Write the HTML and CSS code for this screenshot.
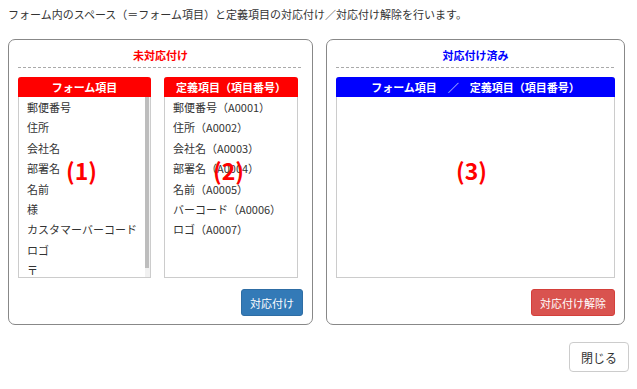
FILE: index.html
```html
<!doctype html>
<html lang="ja">

<head>
  <meta charset="utf-8">
  <title>対応付け</title>
  <link rel="stylesheet" href="styles.css">
</head>

<body>
  <p class="intro">フォーム内のスペース（＝フォーム項目）と定義項目の対応付け／対応付け解除を行います。</p>

  <div class="panels">

    <!-- unmatched -->
    <div class="panel panel-left">
      <div class="panel-title red">未対応付け</div>
      <div class="lists">
        <div class="list list-form">
          <div class="list-head red-bg">フォーム項目</div>
          <ul class="list-body">
            <li>郵便番号</li>
            <li>住所</li>
            <li>会社名</li>
            <li>部署名</li>
            <li>名前</li>
            <li>様</li>
            <li>カスタマーバーコード</li>
            <li>ロゴ</li>
            <li>〒</li>
          </ul>
          <span class="scrollbar"><span class="thumb"></span></span>
          <span class="mark mark-1">(1)</span>
        </div>
        <div class="list list-def">
          <div class="list-head red-bg">定義項目（項目番号）</div>
          <ul class="list-body">
            <li>郵便番号（A0001）</li>
            <li>住所（A0002）</li>
            <li>会社名（A0003）</li>
            <li>部署名（A0004）</li>
            <li>名前（A0005）</li>
            <li>バーコード（A0006）</li>
            <li>ロゴ（A0007）</li>
          </ul>
          <span class="mark mark-2">(2)</span>
        </div>
      </div>
      <div class="actions">
        <button type="button" class="btn btn-primary">対応付け</button>
      </div>
    </div>

    <!-- matched -->
    <div class="panel panel-right">
      <div class="panel-title blue">対応付け済み</div>
      <div class="list list-pairs">
        <div class="list-head blue-bg">フォーム項目　／　定義項目（項目番号）</div>
        <ul class="list-body"></ul>
        <span class="mark mark-3">(3)</span>
      </div>
      <div class="actions">
        <button type="button" class="btn btn-danger">対応付け解除</button>
      </div>
    </div>

  </div>

  <div class="footer">
    <button type="button" class="btn btn-default">閉じる</button>
  </div>
</body>

</html>
```

FILE: styles.css
```css
html,
body {
  margin: 0;
  padding: 0;
  background: #fff;
}

body {
  padding: 6px 8px 0;
  font-family: "Noto Sans CJK JP", "Noto Sans", sans-serif;
  font-size: 11px;
  color: #333;
}

.intro {
  margin: 0;
  line-height: 16px;
}

.panels {
  display: flex;
  gap: 13px;
  margin-top: 17px;
}

.panel {
  border: 1px solid #888;
  border-radius: 7px;
  padding: 0 9px 8px;
}

.panel-left {
  width: 285px;
}

.panel-right {
  width: 279px;
}

.panel-title {
  height: 28px;
  box-sizing: border-box;
  padding-top: 7px;
  margin-bottom: 9px;
  line-height: 16px;
  text-align: center;
  font-weight: bold;
  background: repeating-linear-gradient(to right, #aaa 0 3px, transparent 3px 5px) bottom / 100% 1px no-repeat;
}

.red {
  color: #f00;
}

.blue {
  color: #00f;
}

.lists {
  display: flex;
  gap: 13px;
}

.list {
  position: relative;
  display: flex;
  flex-direction: column;
  height: 201px;
  box-sizing: border-box;
  border: 1px solid #ccc;
  border-top: none;
  border-radius: 3px 3px 0 0;
}

.list-form {
  width: 133px;
}

.list-def {
  width: 134px;
}

.list-pairs {
  width: 279px;
}

.list-head {
  height: 20px;
  margin: 0 -1px;
  border-radius: 3px 3px 0 0;
  line-height: 20px;
  text-align: center;
  font-weight: bold;
  color: #fff;
}

.red-bg {
  background: #f00;
}

.blue-bg {
  background: #00f;
}

.list-body {
  flex: 1;
  min-height: 0;
  margin: 0;
  padding: 0 0 0 8px;
  list-style: none;
  overflow: hidden;
}

.list-body li {
  line-height: 20.4px;
  white-space: nowrap;
}

/* scrollbar of the form item list */
.scrollbar {
  position: absolute;
  top: 20px;
  right: 0;
  bottom: 0;
  width: 5px;
  background: #f1f1f1;
}

.thumb {
  display: block;
  width: 4px;
  height: 171px;
  background: #bdbdbd;
}

/* annotation markers drawn over the lists */
.mark {
  position: absolute;
  top: 78px;
  font-size: 23px;
  font-weight: bold;
  line-height: 30px;
  color: #f00;
}

.mark-1 {
  left: 47px;
}

.mark-2 {
  left: 48px;
}

.mark-3 {
  left: 119px;
}

.actions {
  display: flex;
  justify-content: flex-end;
  margin-top: 11px;
}

.btn {
  height: 27px;
  padding: 0 8px;
  border: 1px solid transparent;
  border-radius: 3px;
  font-family: inherit;
  font-size: 11px;
  cursor: pointer;
}

.btn-primary {
  background: #337ab7;
  border-color: #2e6da4;
  color: #fff;
}

.btn-danger {
  background: #d9534f;
  border-color: #d43f3a;
  color: #fff;
}

.btn-default {
  height: 30px;
  padding: 0 11px;
  background: #fff;
  border-color: #ccc;
  border-radius: 4px;
  font-size: 12px;
  color: #333;
}

.footer {
  display: flex;
  justify-content: flex-end;
  margin-top: 17px;
}
```
